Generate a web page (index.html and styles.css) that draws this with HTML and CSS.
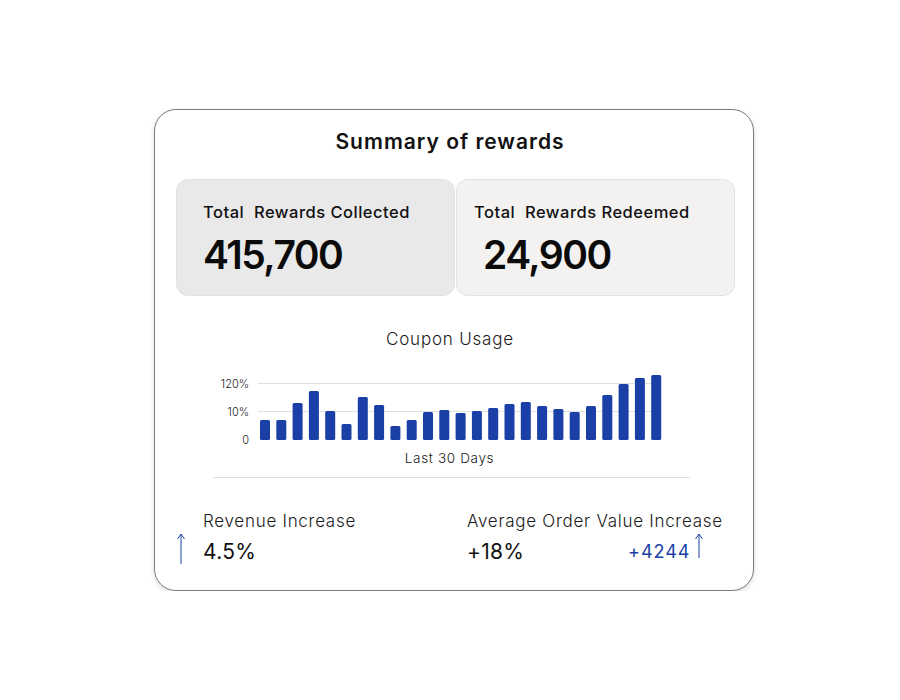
FILE: index.html
```html
<!DOCTYPE html>
<html lang="en">
<head>
<meta charset="utf-8">
<title>Summary of rewards</title>
<link rel="stylesheet" href="styles.css">
</head>
<body>
<div class="page">
  <section class="card">
    <h1 class="title">Summary of rewards</h1>

    <div class="totals">
      <div class="total total-collected">
        <div class="total-label">Total&nbsp; Rewards Collected</div>
        <div class="total-value">415,700</div>
      </div>
      <div class="total total-redeemed">
        <div class="total-label">Total&nbsp; Rewards Redeemed</div>
        <div class="total-value">24,900</div>
      </div>
    </div>

    <div class="usage">
      <h2 class="usage-title">Coupon Usage</h2>
      <div class="chart">
        <div class="plot-row">
          <div class="y-axis">
            <span class="y-label">120%</span>
            <span class="y-label">10%</span>
            <span class="y-label">0</span>
          </div>
          <svg class="plot" width="404" height="66" viewBox="0 0 404 66">
            <line x1="0" y1="9.5" x2="404" y2="9.5" stroke="#e0e0e0" stroke-width="1"/>
            <line x1="0" y1="37.5" x2="404" y2="37.5" stroke="#e0e0e0" stroke-width="1"/>
            <g fill="#1a3fa6" id="bars"></g>
          </svg>
        </div>
        <div class="x-label">Last 30 Days</div>
        <div class="chart-rule"></div>
      </div>
    </div>

    <div class="stats">
      <div class="stat stat-revenue">
        <svg class="arrow arrow-left" width="10" height="31" viewBox="0 0 10 31">
          <path d="M5 31 V1 M1.5 6 L5 1 L8.5 6" fill="none" stroke="#1a3fa6" stroke-width="1"/>
        </svg>
        <div class="stat-text">
          <div class="stat-label">Revenue Increase</div>
          <div class="stat-value">4.5%</div>
        </div>
      </div>
      <div class="stat stat-aov">
        <div class="stat-label">Average Order Value Increase</div>
        <div class="stat-row">
          <div class="stat-value">+18%</div>
          <div class="stat-delta">+4244</div>
          <svg class="arrow arrow-right" width="10" height="25" viewBox="0 0 10 25">
            <path d="M5 25 V1 M1.5 6 L5 1 L8.5 6" fill="none" stroke="#1a3fa6" stroke-width="1"/>
          </svg>
        </div>
      </div>
    </div>
  </section>
</div>
<script>
  (function () {
    var heights = [20,20,37,49,29,16,43,35,14,20,28,30,27,29,32,36,38,34,31,28,34,45,56,62,65];
    var g = document.getElementById('bars');
    var ns = 'http://www.w3.org/2000/svg';
    heights.forEach(function (h, i) {
      var r = document.createElementNS(ns, 'rect');
      r.setAttribute('x', (2 + i * 16.3).toFixed(1));
      r.setAttribute('y', 66 - h);
      r.setAttribute('width', 10);
      r.setAttribute('height', h);
      r.setAttribute('rx', 1.5);
      g.appendChild(r);
    });
  })();
</script>
</body>
</html>
```

FILE: styles.css
```css
* { box-sizing: border-box; }

html, body {
  margin: 0;
  padding: 0;
  background: #ffffff;
}

body {
  font-family: Inter, "Noto Sans", sans-serif;
  color: #111111;
}

.page {
  padding: 109px 0 0 154px;
}

.card {
  width: 600px;
  height: 482px;
  border: 1px solid #7d7d7d;
  border-radius: 22px;
  background: #ffffff;
  box-shadow: 0 2px 5px rgba(0, 0, 0, 0.14);
  padding: 20px 18px 0 21px;
}

.title {
  margin: 0;
  padding-right: 11px;
  font-size: 21px;
  line-height: 24px;
  font-weight: 600;
  text-align: center;
  letter-spacing: 1px;
  color: #111111;
}

.totals {
  display: flex;
  gap: 1px;
  margin-top: 25px;
}

.total {
  width: 279px;
  height: 117px;
  border: 1px solid #e2e2e2;
  border-radius: 12px;
  padding: 22px 0 0 26px;
}

.total-collected { background: #e9e9e9; }
.total-redeemed { background: #f3f2f1; padding-left: 17px; }

.total-label {
  font-size: 16.5px;
  line-height: 20px;
  font-weight: 500;
  letter-spacing: 0.5px;
  color: #111111;
  white-space: pre;
}

.total-value {
  margin-top: 11px;
  font-size: 39px;
  line-height: 44px;
  font-weight: 600;
  letter-spacing: -1.5px;
  color: #0b0b0b;
}

.total-redeemed .total-value { margin-left: 9px; }

.usage {
  margin-top: 33px;
}

.usage-title {
  margin: 0;
  padding-right: 11px;
  font-size: 17px;
  line-height: 20px;
  font-weight: 300;
  text-align: center;
  color: #1a1a1a;
  letter-spacing: 0.8px;
}

.chart {
  width: 477px;
  margin: 25px 0 0 37px;
}

.plot-row {
  display: flex;
  align-items: flex-start;
  height: 66px;
}

.y-axis {
  width: 36px;
  margin-top: -4.5px;
  display: flex;
  flex-direction: column;
  align-items: flex-end;
}

.y-label {
  display: block;
  height: 28px;
  line-height: 28px;
  font-size: 11px;
  font-weight: 300;
  color: #222222;
}

.plot {
  display: block;
  margin-left: 9px;
}

.x-label {
  margin-top: 9px;
  padding-right: 4px;
  font-size: 13.5px;
  line-height: 18px;
  font-weight: 300;
  text-align: center;
  color: #1a1a1a;
  letter-spacing: 0.65px;
}

.chart-rule {
  margin-top: 10px;
  height: 1px;
  background: #dedede;
}

.stats {
  display: flex;
  margin-top: 33px;
}

.stat-revenue {
  width: 291px;
  display: flex;
  align-items: flex-end;
}

.arrow-left {
  display: block;
  margin: 0 17px 0 0;
  flex: none;
}

.stat-label {
  font-size: 17px;
  line-height: 20px;
  font-weight: 300;
  color: #1a1a1a;
  letter-spacing: 0.72px;
  white-space: nowrap;
}

.stat-value {
  margin-top: 9px;
  font-size: 21px;
  line-height: 24px;
  font-weight: 400;
  letter-spacing: 0.3px;
  color: #111111;
}

.stat-row {
  display: flex;
  align-items: flex-end;
}

.stat-row .stat-value {
  width: 161px;
}

.stat-delta {
  font-size: 18px;
  line-height: 22px;
  font-weight: 400;
  color: #1a3fa6;
  letter-spacing: 1px;
  margin-bottom: 1px;
}

.arrow-right {
  display: block;
  margin: 0 0 6px 3px;
  flex: none;
}
```
